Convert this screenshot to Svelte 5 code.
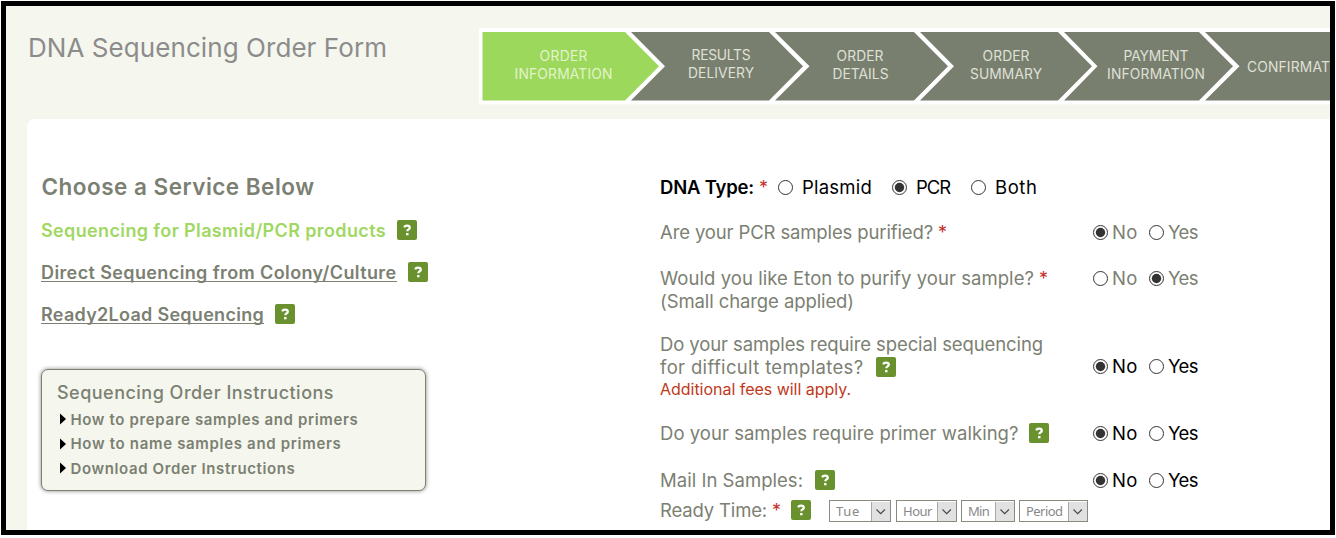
<script>
  // Spreads the letters of a label so that it fills the given width.
  function fit(node, width) {
    const natural = node.getBoundingClientRect().width;
    const count = node.textContent.length;
    node.style.letterSpacing = `${(width - natural) / count}px`;
  }

  const steps = [
    { lines: [['ORDER', 563.5, 48], ['INFORMATION', 563.5, 98]], points: '482.5,32 625,32 659,66.3 625,100.5 482.5,100.5', y: 60.6, active: true },
    { lines: [['RESULTS', 721, 59], ['DELIVERY', 721, 66]], points: '631,32 769,32 803,66.3 769,100.5 631,100.5 665,66.3', y: 59.8 },
    { lines: [['ORDER', 860, 47], ['DETAILS', 860.5, 56]], points: '775,32 914,32 948,66.3 914,100.5 775,100.5 809.5,66.3', y: 60.6 },
    { lines: [['ORDER', 1006, 47], ['SUMMARY', 1006, 72]], points: '920,32 1058,32 1092,66.3 1058,100.5 920,100.5 954,66.3', y: 60.6 },
    { lines: [['PAYMENT', 1156, 65], ['INFORMATION', 1156, 98]], points: '1064,32 1199,32 1233,66.3 1199,100.5 1064,100.5 1097.5,66.3', y: 60.6 },
    { lines: [['CONFIRMATION', 1301, 108]], points: '1205,32 1400,32 1400,100.5 1205,100.5 1239.5,66.3', y: 72.4 }
  ];

  const services = [
    { label: 'Sequencing for Plasmid/PCR products', width: 345, active: true },
    { label: 'Direct Sequencing from Colony/Culture', width: 355.5 },
    { label: 'Ready2Load Sequencing', width: 223 }
  ];

  const guides = [
    { label: 'How to prepare samples and primers', width: 288 },
    { label: 'How to name samples and primers', width: 271 },
    { label: 'Download Order Instructions', width: 225 }
  ];

  const types = [
    { label: 'Plasmid', width: 70, cell: 114 },
    { label: 'PCR', width: 34, cell: 79 },
    { label: 'Both', width: 42.5, cell: 70 }
  ];

  const questions = [
    { lines: [['Are your PCR samples purified?', 273]], required: true, value: 'No', muted: true, gap: 22 },
    { lines: [['Would you like Eton to purify your sample?', 374], ['(Small charge applied)', 194]], required: true, value: 'Yes', muted: true, gap: 23 },
    { lines: [['Do your samples require special sequencing', 383], ['for difficult templates?', 203.5]], help: 12, note: 'Additional fees will apply.', value: 'No', gap: 20 },
    { lines: [['Do your samples require primer walking?', 358.5]], help: 10.5, value: 'No', gap: 22 },
    { lines: [['Mail In Samples:', 143]], help: 12, value: 'No', gap: 24 }
  ];

  const selects = [
    { label: 'Tue', text: 24, width: 62, gap: 5 },
    { label: 'Hour', text: 29, width: 61, gap: 4 },
    { label: 'Min', text: 21, width: 54, gap: 4 },
    { label: 'Period', text: 36.5, width: 69, gap: 0 }
  ];
</script>

{#snippet help()}
  <svg class="help" width="20" height="20" viewBox="0 0 20 20">
    <rect width="20" height="20" rx="2" fill="#69922f" />
    <path d="M7.2 7.3C7.6 6.1 8.6 5.6 10 5.6c1.7 0 2.8.8 2.8 2.1 0 1.8-2.5 1.7-2.5 3.6" fill="none" stroke="#fff" stroke-width="2.2" />
    <rect x="9.1" y="13" width="2.4" height="2.3" fill="#fff" />
  </svg>
{/snippet}

{#snippet radio(on)}
  <svg class="radio" width="16" height="16" viewBox="0 0 16 16">
    <circle cx="7.5" cy="7.5" r="7" fill="#fff" stroke="#333" stroke-width="1" />
    {#if on}<circle cx="7.5" cy="7.5" r="4.7" fill="#333" />{/if}
  </svg>
{/snippet}

<div class="frame">
  <header>
    <h1><span use:fit={359}>DNA Sequencing Order Form</span></h1>
    <svg class="steps" width="851" height="78" viewBox="479 27 851 78">
      <rect x="479" y="28" width="860" height="76.3" fill="#fff" />
      {#each steps as step}
        <polygon points={step.points} fill={step.active ? '#9cd85b' : '#797f6f'} />
        {#each step.lines as [text, x, width], i}
          <text {x} y={step.y + i * 18} textLength={width} text-anchor="middle" fill={step.active ? '#e3f3cb' : '#dfe0d6'}>{text}</text>
        {/each}
      {/each}
    </svg>
  </header>

  <main>
    <section class="services">
      <h2><span use:fit={273}>Choose a Service Below</span></h2>
      {#each services as s}
        <div class="service" class:active={s.active}>
          <a><span use:fit={s.width}>{s.label}</span></a>
          {@render help()}
        </div>
      {/each}
      <div class="box">
        <h3><span use:fit={277}>Sequencing Order Instructions</span></h3>
        <ul>
          {#each guides as g}
            <li>
              <svg width="6" height="12" viewBox="0 0 6 12"><path d="M0 0.5L6 6L0 11.5Z" fill="#000" /></svg>
              <span use:fit={g.width}>{g.label}</span>
            </li>
          {/each}
        </ul>
      </div>
    </section>

    <section class="form">
      <div class="types">
        <b><span use:fit={94}>DNA Type:</span></b><i>*</i>
        <div class="choices">
          {#each types as t}
            <label style:width="{t.cell}px">{@render radio(t.label === 'PCR')}<span use:fit={t.width}>{t.label}</span></label>
          {/each}
        </div>
      </div>

      {#each questions as q}
        <div class="question" style:margin-top="{q.gap}px">
          <div class="ask">
            {#each q.lines as [text, width], i}
              <div class="line">
                <span use:fit={width}>{text}</span>
                {#if q.required && i === 0}<i>*</i>{/if}
                {#if q.help && i === q.lines.length - 1}
                  <em style:margin-left="{q.help}px">{@render help()}</em>
                {/if}
              </div>
            {/each}
            {#if q.note}<div class="note"><span use:fit={191}>{q.note}</span></div>{/if}
          </div>
          <div class="answer" class:muted={q.muted} class:middle={q.note}>
            <label>{@render radio(q.value === 'No')}<span use:fit={25.5}>No</span></label>
            <label>{@render radio(q.value === 'Yes')}<span use:fit={30}>Yes</span></label>
          </div>
        </div>
      {/each}

      <div class="ready">
        <span use:fit={107}>Ready Time:</span><i>*</i>
        <em>{@render help()}</em>
        <div class="selects">
          {#each selects as s}
            <div class="select" style:width="{s.width}px" style:margin-right="{s.gap}px">
              <span use:fit={s.text}>{s.label}</span>
              <svg width="19" height="19" viewBox="0 0 19 19">
                <rect width="19" height="19" fill="#e1e1e1" />
                <path d="M0.5 0V19" stroke="#a8a8a0" />
                <path d="M5.5 7.5L9.7 11.7L13.9 7.5" fill="none" stroke="#444" stroke-width="1.1" />
              </svg>
            </div>
          {/each}
        </div>
      </div>
    </section>
  </main>
</div>

<style>
  :global(body) { background: #fff; overflow: hidden; }
  .frame {
    box-sizing: border-box;
    width: 1334px;
    height: 534px;
    margin: 1px;
    border: 5px solid #000;
    background: #f5f6ee;
    overflow: hidden;
    font-family: Inter, 'Open Sans', sans-serif;
    font-size: 18.5px;
    line-height: 23px;
    color: #7b8072;
    white-space: nowrap;
  }
  h1, h2, h3, ul { margin: 0; padding: 0; }
  span { display: inline-block; flex: none; }
  svg { display: block; flex: none; }
  header { display: flex; height: 112.5px; }
  h1 {
    width: 451px;
    padding: 24.5px 0 0 22px;
    flex: none;
    font-size: 26px;
    line-height: 34px;
    font-weight: 400;
    color: #8c8c8c;
  }
  .steps { margin-top: 21px; font-size: 13.8px; }
  main {
    display: flex;
    box-sizing: border-box;
    height: 420px;
    margin-left: 21px;
    padding: 57.5px 0 0 14px;
    background: #fff;
    border-top-left-radius: 8px;
  }
  .services { width: 619px; flex: none; }
  h2 { padding-left: 0.5px; font-size: 22.5px; line-height: 21px; height: 22px; font-weight: 600; }
  .service {
    display: flex;
    align-items: center;
    gap: 11px;
    height: 20px;
    margin-top: 22.2px;
    font-size: 18px;
    font-weight: 600;
  }
  .service a {
    display: flex;
    box-sizing: border-box;
    height: 19px;
    line-height: 19px;
    border-bottom: 1px solid #7b8072;
  }
  h2 + .service { margin-top: 22px; }
  .active a { color: #a0d862; border-color: transparent; }
  .box {
    box-sizing: border-box;
    width: 385px;
    height: 122px;
    margin-top: 44.6px;
    padding: 11px 0 0 15px;
    border: 1px solid #7d8174;
    border-radius: 7px;
    background: #f5f6ee;
    box-shadow: 0 0 4px #888;
  }
  h3 { font-size: 18px; line-height: 23px; font-weight: 500; }
  ul { list-style: none; font-size: 15px; font-weight: 600; padding-top: 3px; }
  li { display: flex; align-items: center; gap: 4.5px; height: 24.5px; padding-left: 3px; }

  .types, .line, .ready { display: flex; height: 23px; align-items: center; }
  .types { color: #000; }
  b { font-weight: 600; }
  i { flex: none; width: 7px; margin-left: 5px; font-style: normal; font-size: 18px; color: #c5302b; }
  em { flex: none; margin-top: -1px; }
  .choices { display: flex; margin-left: 11.5px; }
  label { display: flex; align-items: center; }
  .choices label { gap: 8.5px; flex: none; }
  .question { display: flex; }
  .ask { width: 433px; flex: none; }
  .note { font-size: 16px; line-height: 21px; color: #c0391b; }
  .answer { display: flex; height: 23px; color: #000; }
  .answer label { width: 56px; gap: 3px; }
  .muted { color: #7b8072; }
  .middle { align-self: center; }
  .ready { margin-top: 7px; }
  .ready em { margin-left: 11.5px; }
  .selects { display: flex; margin-left: 18.5px; }
  .select {
    display: flex;
    box-sizing: border-box;
    justify-content: space-between;
    height: 22px;
    margin-top: 1px;
    padding-left: 6px;
    border: 1px solid #898b80;
    font: 13px/20px 'Noto Sans', sans-serif;
    color: #888;
    flex: none;
    align-items: center;
  }
</style>
